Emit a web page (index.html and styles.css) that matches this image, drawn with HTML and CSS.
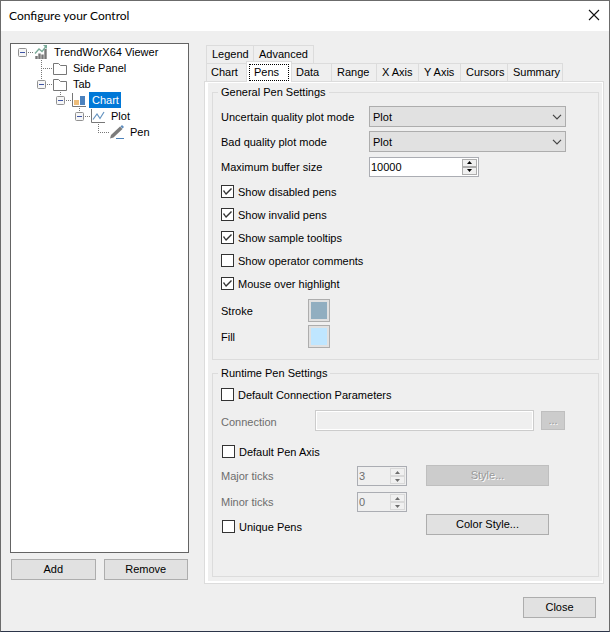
FILE: index.html
```html
<!DOCTYPE html>
<html lang="en">
<head>
<meta charset="utf-8">
<title>Configure your Control</title>
<link rel="stylesheet" href="styles.css">
</head>
<body>
<div class="dialog">
  <header class="titlebar">
    <h1>Configure your Control</h1>
    <button class="close-x" aria-label="Close window"><svg width="12" height="12" viewBox="0 0 12 12"><path d="M1 1l10 10M11 1L1 11" stroke="#111" stroke-width="1.1" fill="none"/></svg></button>
  </header>
  <main class="content">
    <section class="sidebar">
      <ul class="tree">
        <li>
          <div class="node">
            <svg class="branch" viewBox="0 0 16 16"><path class="dots" d="M10 8.5h6"/><rect class="box" x=".5" y="4.5" width="8" height="8" rx="1"/><path class="minus" d="M2 8.5h5"/></svg>
            <svg class="icon" viewBox="0 0 16 16"><path d="M2.500 15V12M5.500 15V9.500M8.500 15V10.500M11.500 15V5" stroke="#777" stroke-width="2.400" fill="none"/><path d="M1 9.500L5 5l3 2.500L12 2.500" stroke="#79aa98" stroke-width="1.300" fill="none"/><path d="M9 1h4v4z" fill="#79aa98"/></svg>
            <span class="name">TrendWorX64 Viewer</span>
          </div>
          <ul>
            <li>
              <div class="node">
                <svg class="branch" viewBox="0 0 16 16"><path class="dots" d="M4.500 0v16M6 8.500h10"/></svg>
                <svg class="icon" viewBox="0 0 16 16"><path d="M.5 14.500v-11h5l2 2h6v9z" fill="#fff" stroke="#777"/></svg>
                <span class="name">Side Panel</span>
              </div>
            </li>
            <li>
              <div class="node">
                <svg class="branch" viewBox="0 0 16 16"><path class="dots" d="M4.500 0v4M10 8.500h6"/><rect class="box" x=".5" y="4.5" width="8" height="8" rx="1"/><path class="minus" d="M2 8.500h5"/></svg>
                <svg class="icon" viewBox="0 0 16 16"><path d="M.5 14.500v-11h5l2 2h6v9z" fill="#fff" stroke="#777"/></svg>
                <span class="name">Tab</span>
              </div>
              <ul>
                <li>
                  <div class="node">
                    <svg class="branch" viewBox="0 0 16 16"><path class="dots" d="M4.500 0v4M10 8.500h6"/><rect class="box" x=".5" y="4.5" width="8" height="8" rx="1"/><path class="minus" d="M2 8.500h5"/></svg>
                    <svg class="icon" viewBox="0 0 16 16"><path d="M.5 1v13.500H14" fill="none" stroke="#777"/><path d="M2 8h5v5H2z" fill="#eebd79"/><path d="M8 4h5v9H8z" fill="#4c82be"/></svg>
                    <span class="name selected">Chart</span>
                  </div>
                  <ul>
                    <li>
                      <div class="node">
                        <svg class="branch" viewBox="0 0 16 16"><path class="dots" d="M4.500 0v4M10 8.500h6"/><rect class="box" x=".5" y="4.5" width="8" height="8" rx="1"/><path class="minus" d="M2 8.500h5"/></svg>
                        <svg class="icon" viewBox="0 0 16 16"><path d="M.5 1v13.500H14" fill="none" stroke="#777"/><path d="M2 11.500L6 6l3 4.500L13 4" fill="none" stroke="#6493c0" stroke-width="1.200"/></svg>
                        <span class="name">Plot</span>
                      </div>
                      <ul>
                        <li>
                          <div class="node">
                            <svg class="branch" viewBox="0 0 16 16"><path class="dots" d="M4.500 0v8M4 8.500h12"/></svg>
                            <svg class="icon" viewBox="0 0 16 16"><path d="M0 14.500l1-3.500L10 2.500l2.500 2.500-9 8.500z" fill="#7c7c7c"/><path d="M10.500 2.500l1.500-1.500 2 2-1.500 1.500z" fill="#5c8bbd"/><path d="M6 14.500h8" stroke="#4d82ba"/></svg>
                            <span class="name">Pen</span>
                          </div>
                        </li>
                      </ul>
                    </li>
                  </ul>
                </li>
              </ul>
            </li>
          </ul>
        </li>
      </ul>
      <div class="tree-actions">
        <button class="btn">Add</button>
        <button class="btn">Remove</button>
      </div>
    </section>

    <section class="settings">
      <div class="tabs" role="tablist">
        <button class="tab w-legend" role="tab">Legend</button>
        <button class="tab w-advanced" role="tab">Advanced</button>
      </div>
      <div class="tabs" role="tablist">
        <button class="tab w-chart" role="tab">Chart</button>
        <button class="tab active" role="tab" aria-selected="true"><span>Pens</span></button>
        <button class="tab w-data" role="tab">Data</button>
        <button class="tab w-range" role="tab">Range</button>
        <button class="tab" role="tab">X Axis</button>
        <button class="tab" role="tab">Y Axis</button>
        <button class="tab w-legend" role="tab">Cursors</button>
        <button class="tab w-summary" role="tab">Summary</button>
      </div>
      <div class="panel">
        <div class="page" role="tabpanel">
          <fieldset class="group">
            <legend>General Pen Settings</legend>
            <div class="fields">
              <label for="uncertain">Uncertain quality plot mode</label>
              <div class="combo"><select id="uncertain"><option>Plot</option></select><svg class="chevron" viewBox="0 0 10 6"><path d="M1 .8l4 4 4-4"/></svg></div>
              <label for="bad">Bad quality plot mode</label>
              <div class="combo"><select id="bad"><option>Plot</option></select><svg class="chevron" viewBox="0 0 10 6"><path d="M1 .8l4 4 4-4"/></svg></div>
              <label for="buffer">Maximum buffer size</label>
              <div class="spinner wide">
                <input id="buffer" type="text" value="10000">
                <div class="arrows"><button aria-label="Increase"><svg viewBox="0 0 5 3"><path d="M0 3L2.500 0 5 3z"/></svg></button><button aria-label="Decrease"><svg viewBox="0 0 5 3"><path d="M0 0l2.500 3L5 0z"/></svg></button></div>
              </div>
            </div>
            <div class="checks">
              <label class="check"><input type="checkbox" checked>Show disabled pens</label>
              <label class="check"><input type="checkbox" checked>Show invalid pens</label>
              <label class="check"><input type="checkbox" checked>Show sample tooltips</label>
              <label class="check"><input type="checkbox">Show operator comments</label>
              <label class="check"><input type="checkbox" checked>Mouse over highlight</label>
            </div>
            <div class="swatches">
              <label for="stroke">Stroke</label>
              <button id="stroke" class="swatch stroke"></button>
              <label for="fill">Fill</label>
              <button id="fill" class="swatch fill"></button>
            </div>
          </fieldset>

          <fieldset class="group runtime">
            <legend>Runtime Pen Settings</legend>
            <label class="check"><input type="checkbox">Default Connection Parameters</label>
            <div class="connection">
              <label for="connection" class="dim">Connection</label>
              <input id="connection" type="text" disabled>
              <button class="btn" aria-label="Browse connection" disabled>...</button>
            </div>
            <div class="axis">
              <div class="axis-fields">
                <label class="check"><input type="checkbox">Default Pen Axis</label>
                <div class="tick-row">
                  <label for="major" class="dim">Major ticks</label>
                  <div class="spinner">
                    <input id="major" type="text" value="3" disabled>
                    <div class="arrows"><button aria-label="Increase" disabled><svg viewBox="0 0 5 3"><path d="M0 3L2.500 0 5 3z"/></svg></button><button aria-label="Decrease" disabled><svg viewBox="0 0 5 3"><path d="M0 0l2.500 3L5 0z"/></svg></button></div>
                  </div>
                </div>
                <div class="tick-row">
                  <label for="minor" class="dim">Minor ticks</label>
                  <div class="spinner">
                    <input id="minor" type="text" value="0" disabled>
                    <div class="arrows"><button aria-label="Increase" disabled><svg viewBox="0 0 5 3"><path d="M0 3L2.500 0 5 3z"/></svg></button><button aria-label="Decrease" disabled><svg viewBox="0 0 5 3"><path d="M0 0l2.500 3L5 0z"/></svg></button></div>
                  </div>
                </div>
                <label class="check"><input type="checkbox">Unique Pens</label>
              </div>
              <div class="style-buttons">
                <button class="btn" disabled>Style...</button>
                <button class="btn">Color Style...</button>
              </div>
            </div>
          </fieldset>
        </div>
      </div>
    </section>
  </main>
  <footer class="footer"><button class="btn">Close</button></footer>
</div>
</body>
</html>
```
FILE: styles.css
```css
* {
  box-sizing: border-box;
}

body {
  margin: 0;
  background: #efefef;
  color: #000;
  font: 11px/16px "Liberation Sans", Arial, sans-serif;
}

button, input, select {
  margin: 0;
  padding: 0;
  color: inherit;
  font: inherit;
  border-radius: 0;
}

ul {
  margin: 0;
  padding: 0;
  list-style: none;
}

svg {
  display: block;
}

.dialog {
  display: flex;
  flex-direction: column;
  min-height: 100vh;
  border: 1px solid #6b6b6b;
  border-bottom-color: #2b3449;
}

.titlebar {
  display: flex;
  align-items: center;
  justify-content: space-between;
  height: 30px;
  padding: 0 8px;
  background: #fff;
}

.titlebar h1 {
  margin: 0;
  font: 12px/16px Lato, "Open Sans", sans-serif;
}

.close-x {
  padding: 0 1px 2px;
  border: 0;
  background: none;
}

.content {
  display: flex;
  flex: 1;
  gap: 15px;
  padding: 12px 5px 0 9px;
}

/* Tree */

.sidebar {
  display: flex;
  flex-direction: column;
  width: 179px;
  padding-bottom: 4px;
}

.tree {
  flex: 1;
  padding-left: 7px;
  border: 1px solid #646464;
  background: #fff;
}

.tree ul {
  padding-left: 19px;
}

.node {
  display: flex;
  height: 16px;
}

.branch, .icon {
  flex: none;
  width: 16px;
  height: 16px;
}

.dots {
  fill: none;
  stroke: #777;
  stroke-dasharray: 1 1;
}

.box {
  fill: #f6f6f6;
  stroke: #919191;
}

.minus {
  stroke: #3f55a5;
}

.name {
  margin-left: 1px;
  padding: 0 2px 0 3px;
}

.selected {
  background: #0078d7;
  color: #fff;
}

.tree-actions {
  display: grid;
  grid-template-columns: 1fr 1fr;
  gap: 8px;
  padding: 6px 1px 0;
}

.btn {
  height: 21px;
  border: 1px solid #adadad;
  background: #e1e1e1;
  line-height: 19px;
}

.btn:disabled {
  border-color: #bfbfbf;
  background: #ccc;
  color: #999;
  text-shadow: 1px 1px #fff;
}

/* Tabs */

.settings {
  display: flex;
  flex: 1;
  flex-direction: column;
  padding-top: 2px;
}

.tabs {
  display: flex;
  padding-left: 2px;
}

.tab {
  width: 43px;
  height: 18px;
  margin-right: -1px;
  padding-left: 5px;
  border: 1px solid #dcdcdc;
  border-bottom: 0;
  background: #efefef;
  line-height: 17px;
  text-align: left;
  white-space: nowrap;
}

.w-chart {
  padding-left: 4px;
}

.w-data {
  width: 41px;
  padding-left: 4px;
}

.w-range {
  width: 46px;
}

.w-legend {
  width: 48px;
}

.w-summary {
  width: 56px;
}

.w-advanced {
  width: 61px;
}

.active {
  position: relative;
  z-index: 1;
  width: 46px;
  height: 21px;
  margin: -2px -1px -1px -2px;
  padding: 1px 2px;
  background: #fff;
}

.active span {
  display: block;
  padding: 0 0 1px 4px;
  border: 1px dotted #000;
  line-height: 14px;
}

.panel {
  flex: 1;
  padding: 1px 1px 2px 3px;
  border: 1px solid #dcdcdc;
  background: #fff;
}

.page {
  height: 100%;
  padding: 3px 3px 4px 4px;
  background: #efefef;
}

/* Groups */

.group {
  min-width: 0;
  margin: 0 0 7px;
  padding: 5px 8px 11px;
  border: 1px solid #dcdcdc;
}

.runtime {
  margin-bottom: 0;
  padding: 3px 8px 38px;
}

legend {
  margin-left: -3px;
  padding: 0 3px;
  line-height: 13px;
}

.fields {
  display: grid;
  grid-template-columns: 148px 197px;
  grid-auto-rows: 25px;
  align-items: center;
}

.combo {
  position: relative;
}

.combo select {
  display: block;
  width: 100%;
  height: 21px;
  padding-left: 3px;
  border: 1px solid #adadad;
  appearance: none;
  background: #e1e1e1;
}

.chevron {
  position: absolute;
  top: 8px;
  right: 4px;
  width: 10px;
  height: 6px;
  fill: none;
  stroke: #444;
  stroke-width: 1.2;
  pointer-events: none;
}

.spinner {
  display: flex;
  width: 50px;
  height: 20px;
  padding: 1px;
  border: 1px solid #abadb3;
  background: #efefef;
}

.spinner.wide {
  width: 110px;
  background: #fff;
}

.spinner input {
  flex: 1;
  width: 0;
  border: 0;
  background: none;
}

.spinner input:disabled {
  color: #6d6d6d;
}

.arrows {
  display: flex;
  flex-direction: column;
  width: 15px;
}

.arrows button {
  display: flex;
  flex: 1;
  align-items: center;
  justify-content: center;
  border: 1px solid #adadad;
  background: #f0f0f0;
}

.arrows button:disabled {
  border-color: #d9d9d9;
  color: #6d6d6d;
}

.arrows svg {
  width: 5px;
  height: 3px;
  fill: currentColor;
}

.checks {
  padding: 1px 0 4px;
}

.check {
  display: flex;
  align-items: center;
  gap: 4px;
  height: 23px;
}

.check input {
  width: 13px;
  height: 13px;
  border: 1px solid #333;
  appearance: none;
  background: #fff;
}

.check input:checked::before {
  display: block;
  width: 11px;
  height: 11px;
  background: #333;
  clip-path: polygon(1px 5px, 2px 4px, 4px 7px, 9px 2px, 10px 3px, 4px 9px);
  content: "";
}

.swatches {
  display: grid;
  grid-template-columns: 87px 22px;
  gap: 3px 0;
  align-items: center;
}

.swatch {
  height: 23px;
  padding: 2px;
  border: 1px solid #adadad;
  background: #e1e1e1 content-box;
  box-shadow: inset 0 0 0 2px #e1e1e1;
}

.stroke {
  background-color: #91aec0;
}

.fill {
  background-color: #bfe6ff;
}

.dim {
  color: #6d6d6d;
}

.connection {
  display: grid;
  grid-template-columns: 94px 219px 24px;
  align-items: center;
  height: 34px;
  padding-bottom: 6px;
}

.connection label {
  padding-top: 3px;
}

.connection input {
  height: 21px;
  border: 1px solid #ccc;
  background: #efefef;
  box-shadow: inset 0 0 0 1px #fff;
}

.connection .btn {
  height: 19px;
  margin: 0 -7px 0 7px;
  line-height: 16px;
}

.axis {
  display: flex;
  gap: 19px;
}

.axis-fields {
  width: 186px;
}

.axis-fields .check {
  padding-left: 1px;
}

.tick-row {
  display: flex;
  align-items: center;
  justify-content: space-between;
  height: 26px;
}

.style-buttons {
  display: flex;
  flex-direction: column;
  gap: 28px;
  width: 123px;
  padding-top: 25px;
}

.footer {
  display: flex;
  justify-content: flex-end;
  padding: 13px 13px 13px 0;
}

.footer .btn {
  width: 73px;
}
```
